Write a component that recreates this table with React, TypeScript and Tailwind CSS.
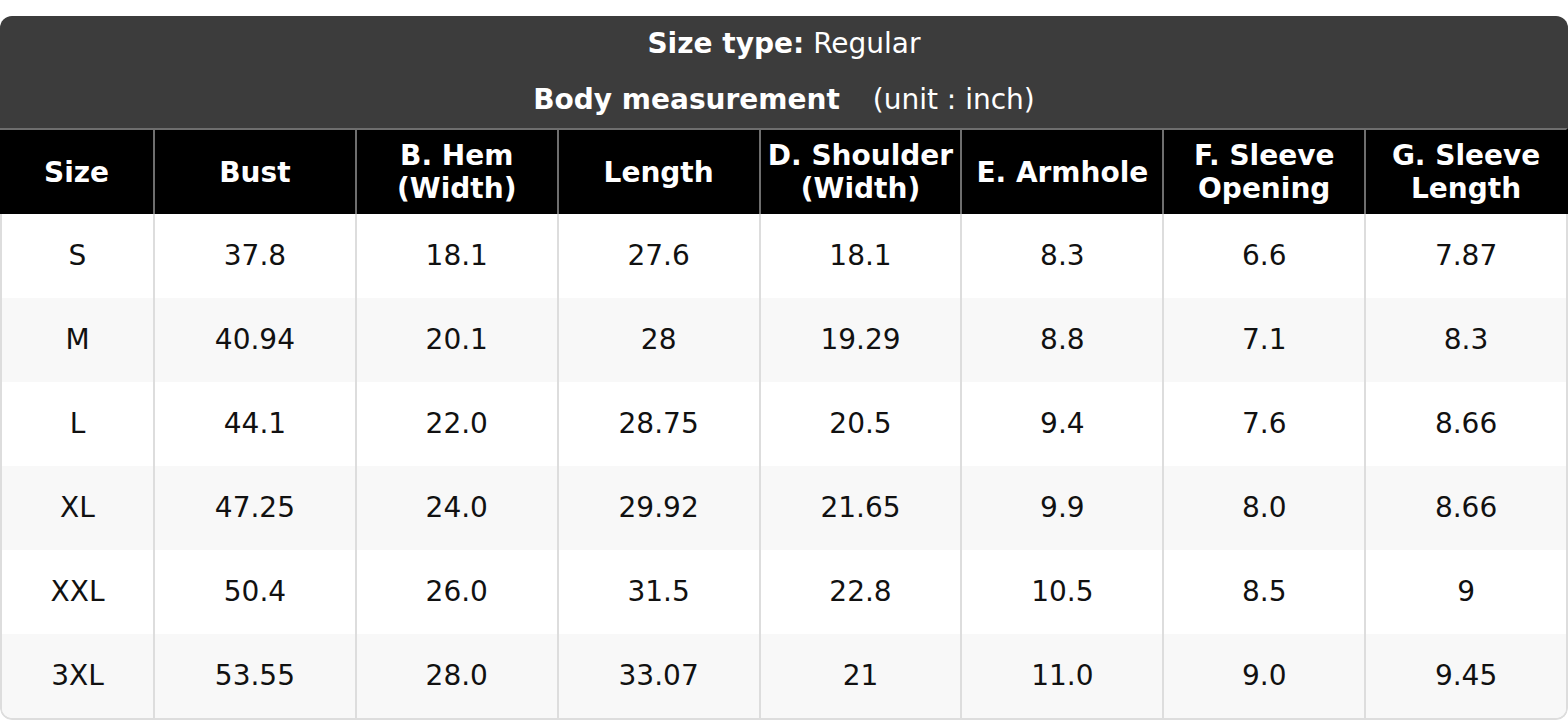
import React from "react";

const headers: string[][] = [
  ["Size"],
  ["Bust"],
  ["B. Hem", "(Width)"],
  ["Length"],
  ["D. Shoulder", "(Width)"],
  ["E. Armhole"],
  ["F. Sleeve", "Opening"],
  ["G. Sleeve", "Length"],
];

const rows: string[][] = [
  ["S", "37.8", "18.1", "27.6", "18.1", "8.3", "6.6", "7.87"],
  ["M", "40.94", "20.1", "28", "19.29", "8.8", "7.1", "8.3"],
  ["L", "44.1", "22.0", "28.75", "20.5", "9.4", "7.6", "8.66"],
  ["XL", "47.25", "24.0", "29.92", "21.65", "9.9", "8.0", "8.66"],
  ["XXL", "50.4", "26.0", "31.5", "22.8", "10.5", "8.5", "9"],
  ["3XL", "53.55", "28.0", "33.07", "21", "11.0", "9.0", "9.45"],
];

export default function App() {
  return (
    <div
      className="w-[1568px] h-[720px] overflow-hidden bg-white pt-[16px]"
      style={{ fontFamily: '"DejaVu Sans", "Liberation Sans", sans-serif' }}
    >
      <div className="rounded-[12px] overflow-hidden">
        <div className="bg-[#3c3c3c] text-white text-[28px]">
          <div className="h-[56px] flex items-center justify-center">
            <span className="font-bold">Size type:</span>
            <span className="ml-[9px]">Regular</span>
          </div>
          <div className="h-[56px] flex items-center justify-center">
            <span className="font-bold">Body measurement</span>
            <span className="ml-[33px]">(unit : inch)</span>
          </div>
        </div>
        <div className="grid grid-cols-[153px_repeat(7,minmax(0,1fr))] bg-black text-white border-t-2 border-[#6e6e6e] border-r-2 border-r-black">
          {headers.map((h, i) => (
            <div
              key={i}
              className={`h-[84px] flex flex-col items-center justify-center font-bold text-[28px] leading-[33px] text-center ${
                i > 0 ? "border-l-2 border-[#6e6e6e]" : ""
              }`}
            >
              {h.map((line, j) => (
                <div key={j}>{line}</div>
              ))}
            </div>
          ))}
        </div>
        <div className="border-x-2 border-b-2 border-[#dddddd] rounded-b-[12px] overflow-hidden -mt-0">
          {rows.map((r, ri) => (
            <div
              key={ri}
              className={`grid grid-cols-[151px_repeat(7,minmax(0,1fr))] ${
                ri % 2 === 1 ? "bg-[#f8f8f8]" : "bg-white"
              }`}
            >
              {r.map((c, ci) => (
                <div
                  key={ci}
                  className={`h-[84px] flex items-center justify-center text-[28px] text-[#111111] ${
                    ci > 0 ? "border-l-2 border-[#dddddd]" : ""
                  }`}
                >
                  {c}
                </div>
              ))}
            </div>
          ))}
        </div>
      </div>
    </div>
  );
}
